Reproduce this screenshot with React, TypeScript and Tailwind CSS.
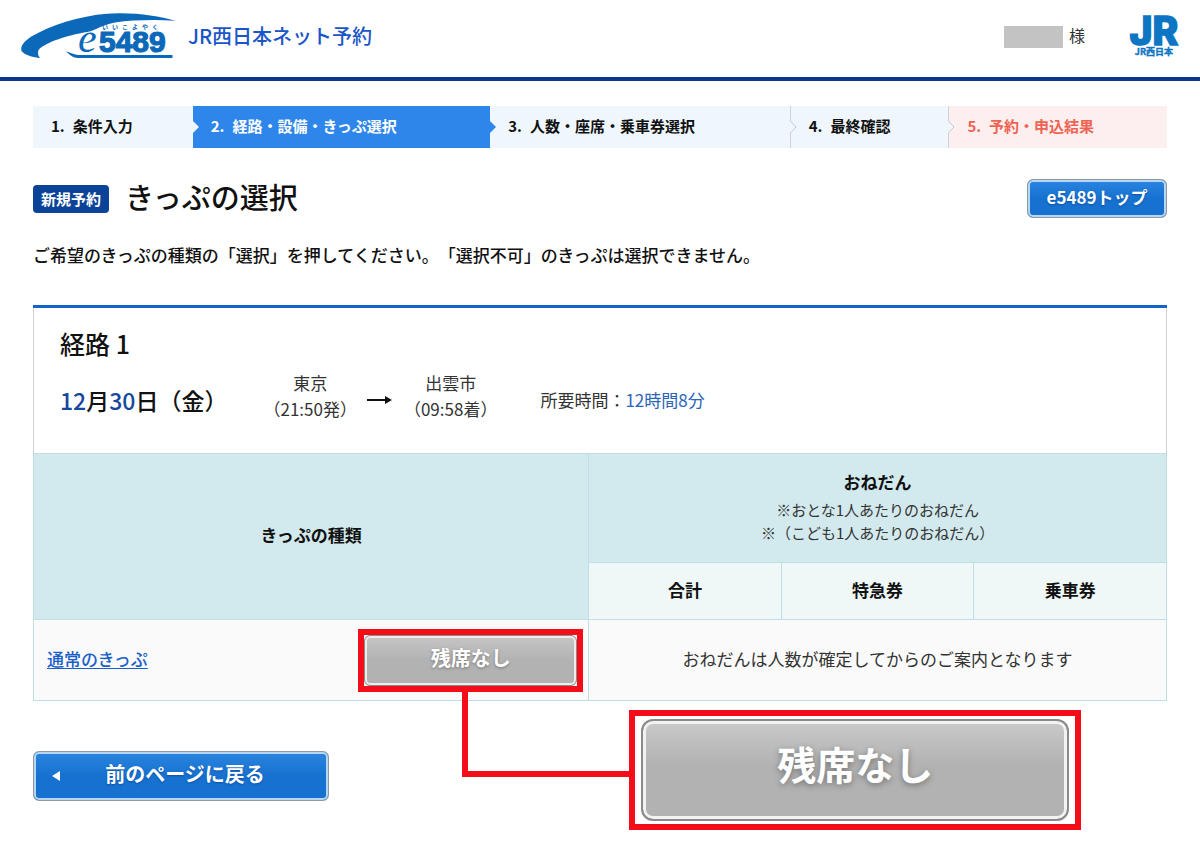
import React from 'react';
import clsx from 'clsx';

const steps = [
  { label: '1. 条件入力', className: 'grow-[160] bg-[#eff7fd]', arrow: 'light' },
  { label: '2. 経路・設備・きっぷ選択', className: 'grow-[298] bg-[#2e86ea] text-white', arrow: 'blue' },
  { label: '3. 人数・座席・乗車券選択', className: 'grow-[300] bg-[#eff7fd] border-r border-[#cdd3d8]', arrow: 'line' },
  { label: '4. 最終確認', className: 'grow-[158] bg-[#eff7fd] border-r border-[#cdd3d8]', arrow: 'line' },
  { label: '5. 予約・申込結果', className: 'grow-[218] bg-[#fdefef] text-[#ee6352]', arrow: null },
];

function StepArrow({ type }: { type: string }) {
  return (
    <svg
      viewBox="0 0 8 14"
      className={clsx('absolute left-full top-1/2 z-10 h-3.5 w-2 -translate-y-1/2', type === 'line' && '-ml-px')}
      aria-hidden="true"
    >
      {type === 'light' && <path d="M0 1L6 7L0 13Z" fill="#eff7fd" />}
      {type === 'blue' && <path d="M0 1L6 7L0 13Z" fill="#2e86ea" />}
      {type === 'line' && (
        <>
          <rect x="-1" y="1" width="3" height="12" fill="#eff7fd" />
          <path d="M1 0.5L7 7L1 13.5" fill="#eff7fd" stroke="#c3c9ce" />
        </>
      )}
    </svg>
  );
}

function E5489Logo() {
  return (
    <svg viewBox="0 0 156 48" className="h-12 w-[156px] shrink-0 overflow-visible" role="img" aria-label="e5489">
      <path
        d="M20 46C14 45.500 5 43.500 1.500 39C-0.500 33 7 26 19 20.500C40 10 70 1.500 98 1.300C120 1 140 4.500 155.500 8.700C135 7.500 112 8 95 10.500C80 13.500 73 20 64 20.500C50 23 25 30 18.500 38C17.500 41 18 44 20 46Z"
        fill="#0c68b8"
      />
      <path d="M46 39.500C52 41 54 43 61 43H152.500V46H58C52 45.500 49 42 46 39.500Z" fill="#0c68b8" />
      <text x="58" y="40" fontSize="42" fontStyle="italic" fontFamily="'Liberation Serif', serif" fill="#0c68b8">
        e
      </text>
      <text
        x="79"
        y="40"
        fontSize="30"
        fontWeight="700"
        fontFamily="'Liberation Sans', sans-serif"
        fill="#0c68b8"
        stroke="#0c68b8"
        strokeWidth="1.200"
      >
        5489
      </text>
      {['い', 'い', 'こ', 'よ', 'や', 'く'].map((kana, i) => (
        <text
          key={i}
          x={82 + i * 10}
          y="17"
          fontSize="6"
          fontWeight="700"
          fontFamily="'Noto Sans CJK JP', sans-serif"
          fill="#0c68b8"
        >
          {kana}
        </text>
      ))}
    </svg>
  );
}

function JrLogo() {
  return (
    <svg viewBox="0 0 54 42" className="h-[42px] w-[54px] overflow-visible" role="img" aria-label="JR西日本">
      <text
        x="27"
        y="29"
        textAnchor="middle"
        fontSize="39"
        fontWeight="800"
        fontFamily="Inter, sans-serif"
        fill="#0d76c4"
        stroke="#0d76c4"
        strokeWidth="1.500"
      >
        JR
      </text>
      <text
        x="27"
        y="39"
        textAnchor="middle"
        fontSize="9"
        fontWeight="700"
        fontFamily="'Noto Sans CJK JP', sans-serif"
        fill="#0d76c4"
        stroke="#0d76c4"
        strokeWidth="0.400"
      >
        JR西日本
      </text>
    </svg>
  );
}

const blueButton =
  'relative rounded-md border border-[#8f98a3] bg-linear-to-b from-[#2a85e0] to-[#1771d0] to-50% pb-1 font-bold text-white inset-ring-2 inset-ring-[#b5d6f5] text-shadow-[0_1px_2px_rgb(0_50_120/0.5)]';

export default function App() {
  return (
    <div className="bg-white pb-10 font-['Noto_Sans_CJK_JP',sans-serif] text-[#111] [text-spacing-trim:space-all]">
      <header className="flex h-[81px] items-start border-b-4 border-[#0a358a] pt-3 pr-[19px] pl-5">
        <E5489Logo />
        <p className="ml-3 text-xl leading-12 font-medium text-[#1a56c8]">JR西日本ネット予約</p>
        <div className="ml-auto flex items-center pt-1">
          <span className="h-[22px] w-[59px] bg-[#c3c3c3]" />
          <span className="ml-1.5 pb-1 text-base text-[#333]">様</span>
          <a href="#" className="ml-[42px]">
            <JrLogo />
          </a>
        </div>
      </header>

      <main className="px-[33px] pt-[25px]">
        {/* Steps */}
        <ol className="flex text-[15px] font-bold">
          {steps.map((step) => (
            <li key={step.label} className={clsx('relative h-[42px] min-w-0 basis-0', step.className)}>
              <div className="-mr-4 flex h-full items-center pb-0.5 pl-[18px] whitespace-nowrap">
                <span className="mr-2">{step.label.split(' ')[0]}</span>
                <span>{step.label.split(' ')[1]}</span>
              </div>
              {step.arrow && <StepArrow type={step.arrow} />}
            </li>
          ))}
        </ol>

        {/* Title */}
        <div className="mt-[31px] flex h-[39px] items-center">
          <span className="rounded-sm bg-[#0a4397] px-2 text-[15px] leading-7 font-bold text-white">新規予約</span>
          <h1 className="ml-4 pb-1.5 text-[29px] leading-9 font-medium">きっぷの選択</h1>
          <button type="button" className={clsx(blueButton, 'ml-auto h-[39px] w-[140px] text-[17px]')}>
            e5489トップ
          </button>
        </div>
        <p className="mt-[25px] text-[17px] leading-6 font-medium">
          ご希望のきっぷの種類の「選択」を押してください。「選択不可」のきっぷは選択できません。
        </p>

        {/* Route */}
        <section className="mt-[38px] border-t-3 border-[#1462cc]">
          <div className="border-x border-[#ccd0d4] pt-5 pb-[31px] pl-[26px]">
            <h2 className="text-[25px] leading-[30px] font-medium">経路 1</h2>
            <div className="mt-3 flex items-center text-[17px] leading-[26px] text-[#333]">
              <p className="mr-9 pt-2 text-[23px] font-medium text-[#111]">
                <span className="text-[#14489e]">12</span>月<span className="text-[#14489e]">30</span>日（金）
              </p>
              <p className="text-center">
                東京
                <br />
                （21:50発）
              </p>
              <svg viewBox="0 0 25 10" className="mt-2 mr-3 ml-2.5 h-2.5 w-[25px] shrink-0" aria-hidden="true">
                <path d="M0 4H18V1L25 5L18 9V6H0Z" fill="#111" />
              </svg>
              <p className="text-center">
                出雲市
                <br />
                （09:58着）
              </p>
              <p className="ml-[43px] pt-2">
                所要時間：<span className="text-[#2a66b8]">12時間8分</span>
              </p>
            </div>
          </div>

          <table className="w-full table-fixed border-collapse text-[17px] [&_td]:border [&_td]:border-[#bfe0e2] [&_th]:border [&_th]:border-[#bfdfe4] [&_th]:pb-[3px]">
            <colgroup>
              <col className="w-[49%]" />
              <col className="w-[17%]" />
              <col className="w-[17%]" />
              <col className="w-[17%]" />
            </colgroup>
            <thead>
              <tr className="h-[109px] bg-[#d2e9ed]">
                <th rowSpan={2} className="font-bold">
                  きっぷの種類
                </th>
                <th colSpan={3} className="font-bold">
                  おねだん
                  <p className="mt-1 text-[15px] leading-[23px] font-normal text-[#333]">
                    ※おとな1人あたりのおねだん
                    <br />※（こども1人あたりのおねだん）
                  </p>
                </th>
              </tr>
              <tr className="h-[57px] bg-[#eff7f7]">
                <th>合計</th>
                <th>特急券</th>
                <th>乗車券</th>
              </tr>
            </thead>
            <tbody>
              <tr className="h-[81px] bg-[#fafafa]">
                <td className="pr-[5px] pl-[13px]">
                  <div className="flex items-center justify-between">
                    <a href="#" className="pb-[3px] font-medium text-[#1a5fc9] underline underline-offset-2">
                      通常のきっぷ
                    </a>
                    <div className="relative border-6 border-[#f20d19] bg-white">
                      <button
                        type="button"
                        disabled
                        className="block h-[51px] w-[213px] rounded-md border border-[#8a8a8a] bg-linear-to-b from-[#c6c6c6] to-[#b2b2b2] to-50% pb-1 text-xl font-bold text-white inset-ring-2 inset-ring-[#ededed] text-shadow-[0_1px_3px_rgb(0_0_0/0.35)]"
                      >
                        残席なし
                      </button>
                      {/* Enlarged callout with its connector */}
                      <div className="absolute top-full left-[98px] h-[91px] w-[167px] border-b-6 border-l-6 border-[#f20d19]" />
                      <div className="absolute top-[75px] left-[265px] z-10 border-6 border-[#f20d19] bg-white px-1.5 py-[3px]">
                        <div className="flex h-[102px] w-[428px] items-center justify-center rounded-xl border-2 border-[#8a8a8a] bg-linear-to-b from-[#cacaca] to-[#b2b2b2] to-45% pb-3 text-[39px] font-bold text-white inset-ring-3 inset-ring-[#f2f2f2] text-shadow-[0_2px_6px_rgb(0_0_0/0.35)]">
                          残席なし
                        </div>
                      </div>
                    </div>
                  </div>
                </td>
                <td colSpan={3} className="pb-[3px] text-center text-[#333]">
                  おねだんは人数が確定してからのご案内となります
                </td>
              </tr>
            </tbody>
          </table>
        </section>

        <button type="button" className={clsx(blueButton, 'mt-[50px] block h-[50px] w-[296px] pl-2 text-xl')}>
          <svg viewBox="0 0 8 10" className="absolute top-1/2 left-[18px] h-2.5 w-2 -translate-y-1/2" aria-hidden="true">
            <path d="M8 0V10L0 5Z" fill="#fff" />
          </svg>
          前のページに戻る
        </button>
      </main>
    </div>
  );
}
